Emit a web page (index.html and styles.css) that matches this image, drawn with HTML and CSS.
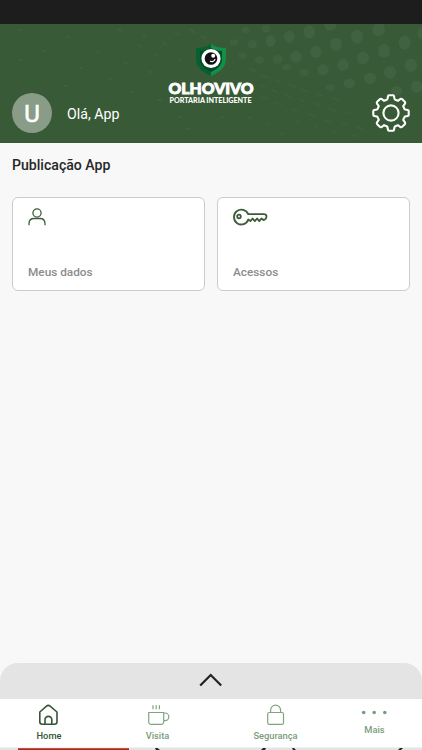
FILE: index.html
```html
<!DOCTYPE html>
<html lang="pt-BR">
<head>
<meta charset="utf-8">
<title>Olho Vivo</title>
<link rel="stylesheet" href="styles.css">
</head>
<body>
<div class="status"></div>
<header class="header">
  <svg class="pattern" viewBox="0 0 422 119" aria-hidden="true">
    <g class="dots" transform="translate(211 -24) scale(.33333)">
      <ellipse cx="295" cy="95" rx="17" ry="20"/><ellipse cx="358" cy="76" rx="18" ry="16"/><ellipse cx="503" cy="88" rx="19" ry="21"/><ellipse cx="438" cy="110" rx="18" ry="21"/><ellipse cx="581" cy="128" rx="18" ry="21"/><ellipse cx="375" cy="133" rx="18" ry="19"/><ellipse cx="519" cy="153" rx="18" ry="21"/><ellipse cx="235" cy="110" rx="16" ry="18"/><ellipse cx="315" cy="156" rx="17" ry="18"/><ellipse cx="456" cy="174" rx="18" ry="19"/><ellipse cx="179" cy="123" rx="15" ry="17"/><ellipse cx="255" cy="170" rx="17" ry="17"/><ellipse cx="396" cy="194" rx="17" ry="18"/><ellipse cx="600" cy="196" rx="18" ry="20"/><ellipse cx="336" cy="209" rx="17" ry="16"/><ellipse cx="537" cy="217" rx="18" ry="19"/><ellipse cx="477" cy="235" rx="18" ry="17"/><ellipse cx="415" cy="250" rx="17" ry="14"/><ellipse cx="617" cy="260" rx="17" ry="18"/><ellipse cx="557" cy="273" rx="18" ry="14"/><ellipse cx="630" cy="100" rx="10" ry="16"/>
    </g>
    <g class="dots faint" transform="translate(211 -24) scale(.33333)">
      <ellipse cx="200" cy="178" rx="15" ry="13"/><ellipse cx="145" cy="180" rx="14" ry="11"/><ellipse cx="124" cy="133" rx="14" ry="13"/><ellipse cx="70" cy="128" rx="13" ry="10"/><ellipse cx="95" cy="167" rx="13" ry="9"/><ellipse cx="280" cy="218" rx="15" ry="11"/><ellipse cx="227" cy="202" rx="14" ry="9"/><ellipse cx="357" cy="262" rx="15" ry="10"/><ellipse cx="166" cy="86" rx="13" ry="11"/><ellipse cx="104" cy="90" rx="12" ry="9"/>
    </g>
    <g class="streaks">
      <path d="M250 45l5 2M262 51l6 3M275 56l6 2M289 60l6 3M302 65l6 3M317 70l6 2M333 74l6 2M260 61l5 2M272 66l5 2M285 70l5 3M299 75l6 3M314 79l6 3M329 84l6 3M346 88l6 2M262 73l5 2M276 79l5 2M292 85l5 2M309 90l5 2M325 96l5 2M342 99l5 2M357 103l5 2M296 97l4 1M314 102l4 1M333 108l4 1M352 111l4 1M220 94l3-1M249 94l3-1M266 100l3-1M281 110l3-1"/>
      <path d="M118 5l4 2M143 11l3 2M163 18l3 3M175 8l4 3M190 5l5 4M201 12l5 3M138 21l3 2M155 30l3 2M178 35l3 2M67 12l3 2M43 27h2M20 36h2M97 27l3 2M124 38l3 2M149 47l3 2M109 55l3 1M80 44h2M65 62h2M19 6h2M131 68h3M158 76h3M178 93h3M186 105h3"/>
    </g>
  </svg>
  <div class="user">
    <div class="avatar">U</div>
    <div class="greeting">Olá, App</div>
  </div>
  <svg class="logo" viewBox="0 0 90 64" role="img" aria-label="Olho Vivo Portaria Inteligente">
    <path class="shield-dark" d="M45 1C40 4 36 5 30 5v11c0 8 6 13 15 17Z"/>
    <path class="shield-light" d="M45 1c5 3 9 4 15 4v11c0 8-6 13-15 17Z"/>
    <path class="shield-inner" d="M45 5c-4 2-7 3-11 3v8c0 6 4 9 11 13 6-3 11-6 11-13V8c-4 0-7-1-11-3Z"/>
    <circle cx="45" cy="15.500" r="9.600" fill="#fff"/>
    <circle cx="45" cy="15.500" r="6.300" fill="#111"/>
    <circle cx="47.200" cy="12.800" r="2" fill="#fff"/>
    <path d="M49 16a3.200 3.200 0 0 1-5 2" fill="none" stroke="#fff" stroke-width="1.200"/>
    <text class="brand" x="2.500" y="51" textLength="85" lengthAdjust="spacingAndGlyphs">OLHOVIVO</text>
    <text class="tagline" x="3.500" y="59.700" textLength="82" lengthAdjust="spacingAndGlyphs">PORTARIA INTELIGENTE</text>
  </svg>
  <svg class="gear" viewBox="-20 -20 40 40" aria-label="Configurações">
    <path d="M-2-17.700H2Q3-17.700 3-16.700L3.500-14.200Q3.700-13.500 4.300-13.300L6.900-12.200 9.300-14Q10.300-14.600 11.200-13.800L13.800-11.200Q14.600-10.300 14-9.300L12.200-6.900 13.300-4.300Q13.500-3.700 14.200-3.500L16.700-3Q17.700-3 17.700-2V2Q17.700 3 16.700 3L14.200 3.500Q13.500 3.700 13.300 4.300L12.200 6.900 14 9.300Q14.600 10.300 13.800 11.200L11.200 13.800Q10.300 14.600 9.300 14L6.900 12.200 4.300 13.300Q3.700 13.500 3.500 14.200L3 16.700Q3 17.700 2 17.700H-2Q-3 17.700-3 16.700L-3.500 14.200Q-3.700 13.500-4.300 13.300L-6.900 12.200-9.300 14Q-10.300 14.600-11.200 13.800L-13.800 11.200Q-14.600 10.300-14 9.300L-12.200 6.900-13.300 4.300Q-13.500 3.700-14.200 3.500L-16.700 3Q-17.700 3-17.700 2V-2Q-17.700-3-16.700-3L-14.200-3.500Q-13.500-3.700-13.300-4.300L-12.200-6.900-14-9.300Q-14.600-10.300-13.800-11.200L-11.200-13.800Q-10.300-14.600-9.300-14L-6.900-12.200-4.300-13.300Q-3.700-13.500-3.500-14.200L-3-16.700Q-3-17.700-2-17.700Z"/>
    <circle r="7.600"/>
  </svg>
</header>
<main class="main">
  <h1 class="title">Publicação App</h1>
  <div class="cards">
    <section class="card">
      <svg class="icon" width="18" height="18" viewBox="0 0 18 18"><circle cx="9" cy="5" r="4.100"/><path d="M1 17.300v-1.500C1 12.500 3.200 10.500 6 10.500h6c2.800 0 5 2 5 5.300v1.500"/></svg>
      <span>Meus dados</span>
    </section>
    <section class="card">
      <svg class="icon key" width="36" height="18" viewBox="0 0 36 18"><path d="M15.200 6.200H30.500c1.600 0 3 .9 3 2.300 0 1.700-1.500 3.500-3 3.500l-2-1.500-2.200 2.600-2.200-2.600-2.300 2.600-2.200-2.600-2.200 2.600-2-1.700A7.400 7.400 0 1 1 15.200 6.200Z"/><circle cx="6" cy="8.500" r="1.800"/></svg>
      <span>Acessos</span>
    </section>
  </div>
</main>
<div class="drawer">
  <svg width="24" height="14" viewBox="0 0 24 14"><path d="M1.200 12.500 11.700 2l10.500 10.500"/></svg>
</div>
<nav class="nav">
  <div class="tab home active">
    <svg width="20" height="22" viewBox="0 0 20 22"><path d="M.800 8 7.500 2.200a2.600 2.600 0 0 1 3.600 0L18 8v9.800a2.500 2.500 0 0 1-2.500 2.500H3.300a2.500 2.500 0 0 1-2.500-2.500ZM6 20v-4.200a3.400 3.400 0 0 1 6.800 0V20"/></svg>
    <span>Home</span>
  </div>
  <div class="tab visita">
    <svg width="22" height="22" viewBox="0 0 22 22"><path d="M.7 8.500h15v9.300a2.500 2.500 0 0 1-2.500 2.500h-10A2.500 2.500 0 0 1 .7 17.800ZM15.700 9h1.300a3.800 3.800 0 0 1 0 7.600h-1.300M5 1.200v4M8.200 1.200v4M11.400 1.200v4"/></svg>
    <span>Visita</span>
  </div>
  <div class="tab seguranca">
    <svg width="18" height="22" viewBox="0 0 18 22"><rect x=".7" y="8.500" width="15.800" height="11.800" rx="1.600"/><path d="M3.600 8.500V6.200a5 5 0 0 1 10 0v2.300"/></svg>
    <span>Segurança</span>
  </div>
  <div class="tab mais">
    <svg width="26" height="6" viewBox="0 0 26 6"><circle class="dot" cx="2.700" cy="2.500" r="1.800"/><circle class="dot" cx="13.200" cy="2.500" r="1.800"/><circle class="dot" cx="23.800" cy="2.500" r="1.800"/></svg>
    <span>Mais</span>
  </div>
</nav>
<svg class="strip" viewBox="0 0 422 3"><path fill="#e4e4e4" d="M0 .5h422V3H0z"/><path fill="#ac2717" d="M18 1.200h111V3H18z"/><path fill="#222" d="M155 1h2.500L160 3h-4zM263 1h3L265 3h-4zM292 1h2L296 3h-3zM400 1h3L401 3h-3z"/></svg>
</body>
</html>
```
FILE: styles.css
```css
* { box-sizing: border-box; }
body {
  margin: 0;
  width: 422px;
  height: 750px;
  display: flex;
  flex-direction: column;
  overflow: hidden;
  background: #f8f8f8;
  font-family: Roboto, "Liberation Sans", sans-serif;
}
svg { display: block; flex: none; }
.status { height: 24px; flex: none; background: #1d1d1d; }
.header {
  position: relative;
  height: 119px;
  flex: none;
  display: grid;
  grid-template-columns: 154px 1fr 40px;
  padding: 0 11px 0 12px;
  background: #385a36;
  color: #fff;
}
.pattern { position: absolute; inset: 0; width: 422px; height: 119px; }
.dots { fill: #7b9c8c; opacity: .13; }
.faint { opacity: .09; }
.streaks { fill: none; stroke: #7b9c8c; stroke-width: 1.8; stroke-linecap: round; opacity: .09; }
.user, .logo, .gear { position: relative; }
.user { display: flex; align-items: center; gap: 15px; align-self: end; height: 40px; margin-bottom: 10px; }
.avatar {
  width: 40px;
  height: 40px;
  border-radius: 50%;
  background: #889c87;
  font-size: 24px;
  font-weight: 400;
  line-height: 42px;
  text-align: center;
  -webkit-text-stroke: .6px #fff;
}
.greeting { font-size: 14.2px; line-height: 20px; padding-top: 1px; white-space: nowrap; }
.logo { width: 90px; height: 64px; margin-top: 18.5px; }
.shield-dark { fill: #07602f; }
.shield-light { fill: #129048; }
.shield-inner { fill: #064a2a; }
.brand { font-family: Lato, sans-serif; font-weight: 900; font-size: 15.6px; fill: #fff; stroke: #fff; stroke-width: .9; }
.tagline { font-family: Lato, sans-serif; font-weight: 900; font-size: 7px; fill: #fff; }
.gear {
  width: 40px;
  height: 40px;
  align-self: end;
  margin-bottom: 10.5px;
  fill: none;
  stroke: #fff;
  stroke-width: 2.1;
  stroke-linejoin: round;
}
.main { flex: 1; padding: 12px 12px 0; }
.title { margin: 0; font-size: 14.1px; font-weight: 500; line-height: 20px; color: #272727; }
.cards { display: grid; grid-template-columns: 1fr 1fr; gap: 12px; margin-top: 22px; }
.card {
  height: 94px;
  display: flex;
  flex-direction: column;
  justify-content: space-between;
  padding: 10px 15px;
  border: 1px solid #ccc;
  border-radius: 6px;
  background: #fff;
  color: #8c8c8c;
  font-size: 11.8px;
  font-weight: 500;
  line-height: 16px;
}
.icon { fill: none; stroke: #3d5c3a; stroke-width: 1.3; }
.key { stroke-width: 1.8; stroke-linejoin: round; }
.drawer {
  height: 36px;
  flex: none;
  display: flex;
  justify-content: center;
  padding-top: 10px;
  border-radius: 18px 18px 0 0;
  background: #e4e4e4;
  fill: none;
  stroke: #222;
  stroke-width: 2.2;
}
.nav {
  height: 48px;
  flex: none;
  display: grid;
  grid-template-columns: 98px 119px 117px 81px;
  background: #fff;
}
.tab {
  display: flex;
  flex-direction: column;
  align-items: center;
  padding-top: 5px;
  color: #7b9c7c;
  font-size: 9.3px;
  font-weight: 500;
  line-height: 12px;
}
.tab svg { fill: none; stroke: #80a480; stroke-width: 1.2; stroke-linejoin: round; }
.tab span { margin-top: 4px; }
.tab.active { color: #345536; }
.tab.active svg { stroke: #345536; stroke-width: 1.6; }
.visita svg { margin-left: 3px; }
.mais { padding-top: 11px; }
.mais svg { margin-right: 2px; }
.mais span { margin-top: 8px; }
.tab svg .dot { fill: #7b9c7c; stroke: none; }
.strip { width: 422px; height: 3px; background: #fff; }
```
